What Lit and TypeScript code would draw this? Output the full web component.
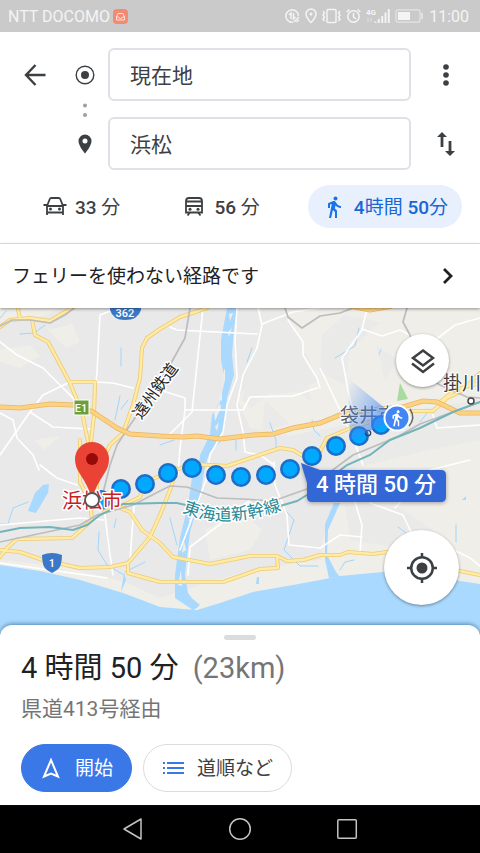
import { LitElement, html, css, svg } from "lit";
import { customElement, state } from "lit/decorators.js";

const OUTLINE_ROADS = [
  "M0 327L10 320L30 318L50 321L63 313L73 308",
  "M17 305L20 318",
  "M32 320L35 335L48 342L70 383L82 412L88 442L90 470",
  "M70 382L95 382L94 415L91 442",
  "M207 308L180 317L160 329L147 338L142 348L140 378L133 405L123 433L110 445L106 453L98 470L96 500",
  "M80 440L80 482L90 502L92 520L72 538L17 539L7 548L0 557",
  "M0 550L20 552L43 560L80 568L110 567L128 563L150 537L160 515L172 485L176 468",
  "M128 563L128 573L160 582L223 582L260 569L278 568L277 557",
  "M120 508L130 512L142 530L160 543L173 557L210 564L250 556L277 556L287 561L303 560L320 555L340 555L348 552L373 554L387 552L420 556L460 571L480 575",
  "M104 512L123 505L140 497L145 482L160 476L192 464L227 466L280 448L293 450L303 456L318 455L327 438L353 427L390 416L413 411L433 411L447 398L460 392L480 373",
  "M440 402L455 390L480 383",
];

const HIGHWAYS = [
  "M0 407L20 408L50 404L73 405L93 412L117 428L130 434L160 436L183 437L197 436L220 439L253 435L273 434L293 428L320 423L340 415L370 410L403 407L423 401L437 402L460 413L480 413",
  "M350 306L370 310L392 306",
];

const LOCAL_ROADS = [
  "M0 342L17 355L43 368L67 392L77 402",
  "M118 308L100 315L97 372L96 382",
  "M0 413L13 420L17 438L33 455L39 470",
  "M70 382L43 395L30 412L0 455",
  "M96 382L113 383L133 388",
  "M30 412L53 427L90 429",
  "M170 327L177 330L257 334",
  "M203 308L198 355L192 412L170 434",
  "M258 308L262 325L257 348L243 375L237 405L243 432L245 452L260 455L274 465",
  "M160 390L185 398L185 410L180 448L178 475",
  "M185 410L243 410L250 397L293 396L317 388",
  "M262 324L293 312L320 308",
  "M288 320L303 342L303 355L317 378L320 388",
  "M237 308L235 340L237 378L227 405L223 432L210 455L206 480",
  "M367 308L362 330L342 358L347 385L352 408L358 430",
  "M362 329L382 336L400 330L410 335",
  "M438 338L455 325L480 318",
  "M320 368L333 395L353 438L363 465",
  "M433 415L437 428L480 425",
  "M0 525L80 518L104 520",
  "M104 508L110 555L113 575",
  "M134 505L130 560",
  "M0 563L107 578",
  "M40 465L57 478L77 485",
  "M206 480L195 510L180 550",
  "M250 500L223 522L190 547L188 575",
  "M274 462L275 485L287 515L289 545L320 548",
  "M355 502L362 525L360 552",
  "M370 503L403 515L411 532",
  "M320 548L340 535L362 537",
  "M456 551L470 558L480 566",
  "M395 508L430 470L470 460",
];

const RAILWAYS = [
  "M0 326L12 320L30 320L50 323L65 315L74 308",
  "M0 542L33 535L80 525L97 515L133 505L160 491L170 486L187 487L217 498L243 499L273 501L307 489L353 455L397 437L420 424L480 402",
  "M190 308L185 338L170 365L137 415L130 425L117 445L110 465L100 505",
  "M285 308L288 317L302 328L320 316L340 313L353 308",
  "M407 308L403 322L410 335L418 370L440 385L467 397L480 398",
];

const SHINKANSEN =
  "M0 532L20 528L50 527L73 530L87 525L100 515L123 504L160 503L177 503L225 514L280 506L297 501L307 495L347 465L370 455L390 440L420 428L453 412L480 402";

const STREAMS = [
  "M0 318L6 311",
  "M20 334L34 333L45 325",
  "M121 348V366",
  "M120 396L115 420",
  "M128 400L121 409",
  "M0 524L8 524L13 508L28 502",
  "M99 532L98 550L107 565L124 575",
  "M125 572L145 562",
  "M116 519L114 528",
  "M170 518L177 545",
  "M252 348L247 362",
  "M270 423L276 440V450",
  "M236 440V450",
  "M312 420L314 430L320 436",
  "M359 328L355 346L335 358",
  "M381 350L379 354",
  "M285 510L294 520L284 550L300 566L318 566",
  "M428 412L420 422",
  "M398 527L406 533",
  "M456 525V542",
  "M340 570L345 562L354 560",
  "M174 440L160 445",
];

const TERRAIN = [
  "M0 350L30 345L40 356L20 368L0 362Z",
  "M48 330L72 324L80 342L66 348Z",
  "M0 308H60L45 316L0 322Z",
  "M34 440L60 436L44 450Z",
  "M258 308H480V590L320 585L322 540L350 470L318 430L290 436L250 428L238 400L262 360Z",
  "M0 560L60 566L125 582L160 598L200 585L250 570L320 560L480 560V590L320 585L250 600L200 615L160 612L80 585L0 570Z",
  "M205 530L240 510L262 530L250 550L210 560Z",
];

const URBAN = [
  "M262 308L285 308L300 340L318 380L300 392L268 394L252 408L242 400Z",
  "M322 335L345 315L380 322L350 350L345 385L320 372Z",
  "M300 345L312 402L298 392Z",
  "M265 400L290 424L262 432Z",
  "M320 430L400 412L480 400V440L430 450L380 462L330 475Z",
  "M345 505L400 508L440 535L400 548L350 540Z",
  "M376 345L398 360L385 380Z",
  "M440 345L452 350L440 365Z",
];

const ROUTE_DOTS: [number, number][] = [
  [101, 500], [121, 489], [145, 484], [168, 473], [192, 468], [216, 475], [241, 477],
  [266, 475], [290, 469], [312, 456], [336, 446], [359, 436], [381, 425],
];

const WALKER =
  "M13.5 5.5c1.1 0 2-.9 2-2s-.9-2-2-2-2 .9-2 2 .9 2 2 2zM9.8 8.9L7 23h2.1l1.8-8 2.1 2v6h2v-7.500l-2.100-2 .6-3C14.800 12 16.800 13 19 13v-2c-1.900 0-3.500-1-4.300-2.400l-1-1.600c-.4-.6-1-1-1.700-1-.3 0-.5.1-.8.1L6 8.300V13h2V9.600l1.800-.7";

const lines = (paths: string[], cls: string) =>
  svg`<g class=${cls}>${paths.map((d) => svg`<path d=${d} />`)}</g>`;

@customElement("route-map")
class RouteMap extends LitElement {
  static styles = css`
    :host { display: block; position: relative; overflow: hidden; }
    .map { position: absolute; inset: 0; width: 100%; height: 100%; display: block; }
    .case, .fill, .local, .rail, .stream { fill: none; stroke-linejoin: round; stroke-linecap: round; }
    .terrain { fill: #efeee9; }
    .urban { fill: #eaeae8; }
    .water { fill: #a9d9fe; }
    .stream { stroke: #a3d5fb; stroke-width: 1; }
    .local { stroke: #fff; stroke-width: 1.6; }
    .rail { stroke: #bdbdc0; stroke-width: 1.700; }
    .case { stroke: #eecb70; stroke-width: 4; }
    .fill { stroke: #ffeba6; stroke-width: 2.400; }
    .hcase { fill: none; stroke: #e9b565; stroke-width: 5; }
    .hfill { fill: none; stroke: #fcd280; stroke-width: 3.400; }
    .bullet { fill: none; stroke: #74b3b9; stroke-width: 2; }
    .dot { fill: #00a9ff; stroke: #1d6dc9; stroke-width: 2.600; }
    text { font-family: Roboto, "Noto Sans CJK JP", sans-serif; paint-order: stroke; stroke-linejoin: round; }
    .city { font-size: 19px; fill: #5b5f66; stroke: #fff; stroke-width: 2; }
    .dark { fill: #3c4043; }
    .target { font-size: 20px; fill: #c5221f; stroke: #fff; stroke-width: 3; }
    .railname { font-size: 16px; fill: #222; stroke: #fff; stroke-width: 3; }
    .bulletname { font-size: 17px; fill: #288a96; stroke: #fff; stroke-width: 3; }
    .badge { font-size: 11px; font-weight: 500; fill: #fff; text-anchor: middle; }
    .callout { fill: #3367d6; filter: drop-shadow(0 1px 2px #0005); }
    .time { font-size: 22px; font-weight: 500; fill: #fff; text-anchor: middle; }
    button {
      position: absolute; border: 0; padding: 0; border-radius: 50%; background: #fff; color: #3c4043;
      display: grid; place-items: center; box-shadow: 0 1px 3px #0006;
    }
    .layers { top: 26px; right: 31px; width: 53px; height: 53px; }
    .locate { bottom: 30px; right: 21px; width: 75px; height: 75px; }
  `;

  render() {
    return html`
      <svg class="map" viewBox="0 308 480 327" preserveAspectRatio="xMidYMid slice" role="img" aria-label="地図">
        <defs>
          <linearGradient id="beam" x1="397" y1="418" x2="345" y2="390" gradientUnits="userSpaceOnUse">
            <stop offset="0" stop-color="#4285f4" stop-opacity=".8" />
            <stop offset="1" stop-color="#4285f4" stop-opacity=".02" />
          </linearGradient>
          <path id="arc" d="M182 512C212 525 246 523 290 507" />
        </defs>
        <rect y="308" width="480" height="327" fill="#e9e9e9" />
        ${lines(TERRAIN, "terrain")} ${lines(URBAN, "urban")}
        <path class="water" d="M0 565L40 571L80 580L123 593L147 602L160 607L183 609L197 610L220 603L253 592L293 585L320 580L340 576L383 572L440 576L460 581L480 584V635H0Z" />
        <path class="water" d="M227 308H237L234 328L232 355L234 375L227 398L225 422L220 442L210 452L205 465L203 478L200 498L190 532L185 575L188 593L198 607L193 610L175 598V575L180 538L188 505L192 478L199 465L200 455L210 435L212 415L220 402L225 380L221 360L221 340Z" />
        <path class="water" d="M43 485L49 484L48 493L36 513L28 511L35 493ZM334 503L340 503L328 530L327 555L336 572L340 577L329 578L325 560L325 524ZM188 595L200 605L193 610ZM257 577H259V584H256ZM462 500L466 496V500ZM124 573L126 580L121 592Z" />
        <path class="terrain" d="M229 314L233 313L230 321ZM228 332L232 328L229 337ZM224 370L225 369V380L223 379ZM219 399L222 392V401ZM214 412L220 403L221 408L215 421ZM215 427L219 422L217 431ZM189 520L193 514L190 526ZM182 553L184 541L186 550ZM178 585L181 570L182 586Z" />
        ${lines(STREAMS, "stream")} ${lines(LOCAL_ROADS, "local")}
        ${lines(OUTLINE_ROADS, "case")} ${lines(OUTLINE_ROADS, "fill")}
        ${lines(RAILWAYS, "rail")}
        ${lines(HIGHWAYS, "hcase")} ${lines(HIGHWAYS, "hfill")}
        <path class="bullet" d=${SHINKANSEN} />
        <path d="M400 383L408 399L397 401Z" fill="#a8dba0" />

        <path d="M110 308H141V310Q138 320 125 320Q113 320 110 310Z" fill="#3b78c8" />
        <text class="badge" x="125" y="317">362</text>
        <rect x="74" y="400" width="15" height="15" fill="#6a9f3c" stroke="#fff" stroke-width="1" />
        <text class="badge" x="81" y="412">E1</text>
        <path d="M42 555Q47 553 52 553Q57 553 62 555Q62 567 57 570L52 573L47 570Q42 567 42 555Z" fill="#3b78c8" />
        <text class="badge" x="52" y="567">1</text>

        <text class="railname" transform="translate(141 420) rotate(-54)">遠州鉄道</text>
        <text class="bulletname"><textPath href="#arc">東海道新幹線</textPath></text>
        <text class="city" x="340" y="422">袋井市</text>
        <text class="city dark" x="443" y="390">掛川</text>
        <circle cx="471" cy="401" r="3" fill="#fff" stroke="#444" stroke-width="1.500" />

        ${ROUTE_DOTS.map(([x, y]) => svg`<circle class="dot" cx=${x} cy=${y} r="8.700" />`)}
        <circle cx="368" cy="433" r="2.700" fill="none" stroke="#345" stroke-width="1.300" />
        <path d="M397 418L348 378L350 440Z" fill="url(#beam)" />
        <path d="M410 409Q416 418 409 426" fill="none" stroke="#666" stroke-width="1.500" />
        <circle cx="397" cy="418" r="12.500" fill="#4285f4" stroke="#fff" stroke-width="2" />
        <path d=${WALKER} fill="#fff" transform="translate(388 409) scale(.75)" />

        <text class="target" x="62" y="508">浜松市</text>
        <path d="M92 498Q88 486 80 474Q75 467 75 459A17 17 0 0 1 109 459Q109 467 104 474Q96 486 92 498Z" fill="#ea4335" />
        <circle cx="92" cy="459" r="6" fill="#960a0a" />
        <circle cx="92" cy="500" r="7" fill="#fff" stroke="#555" stroke-width="1.800" />

        <path class="callout" d="M301 463L320 470H441Q446 470 446 475V497Q446 502 441 502H312Q307 502 307 497V483Z" />
        <text class="time" x="376" y="492">4 時間 50 分</text>
      </svg>
      <button class="layers" aria-label="レイヤ">
        <svg width="26" height="28" viewBox="0 0 26 28" fill="none" stroke="currentColor" stroke-width="2.500">
          <path d="M13 3.500L23 11L13 18.500L3 11Z" /><path d="M2 16.500L13 25L24 16.500" />
        </svg>
      </button>
      <button class="locate" aria-label="現在地を表示">
        <svg width="30" height="30" viewBox="0 0 30 30" fill="none" stroke="currentColor" stroke-width="2.500">
          <circle cx="15" cy="15" r="10.800" /><circle cx="15" cy="15" r="5.500" fill="currentColor" stroke="none" />
          <path d="M15 0V5M15 25V30M0 15H5M25 15H30" />
        </svg>
      </button>
    `;
  }
}

const carIcon = svg`
  <path d="M4 10L6.800 3Q7.200 2 8.300 2H15.700Q16.800 2 17.200 3L20 10V19M4 10V19M4 10H20M4 16.500H20M.5 9H4M20 9H23.500" fill="none" stroke="currentColor" stroke-width="1.800" />
  <circle cx="7.500" cy="13" r="1.500" /><circle cx="16.500" cy="13" r="1.500" />`;
const trainIcon = svg`
  <path d="M4 5Q4 2 7 2H17Q20 2 20 5V16.500H4ZM4 10H20M4 5.500H20M8 16.500L5.500 19.500M16 16.500L18.500 19.500" fill="none" stroke="currentColor" stroke-width="1.800" />
  <circle cx="8" cy="13.200" r="1.500" /><circle cx="16" cy="13.200" r="1.500" />`;
const walkIcon = svg`<path d=${WALKER} transform="translate(0 -1)" />`;

const MODES = [
  { id: "car", label: html`<b>33</b> 分`, icon: carIcon },
  { id: "transit", label: html`<b>56</b> 分`, icon: trainIcon },
  { id: "walk", label: html`<b>4</b>時間 <b>50</b>分`, icon: walkIcon },
];

@customElement("app-root")
class AppRoot extends LitElement {
  @state() private mode = "walk";

  static styles = css`
    :host {
      display: flex; flex-direction: column; min-height: 100vh; background: #fff; color: #202124;
      font-family: Roboto, "Noto Sans CJK JP", sans-serif;
    }
    * { box-sizing: border-box; }
    svg { display: block; flex: none; }
    button { font: inherit; color: inherit; border: 0; padding: 0; background: none; cursor: pointer; }
    .status {
      display: flex; align-items: center; justify-content: space-between; height: 32px; padding: 0 11px 0 8px;
      background: #cacaca; color: #f4f4f4; font-size: 16px;
    }
    .status div { display: flex; align-items: center; gap: 3px; }
    .status .right { gap: 5px; }
    .status .clock { margin-left: 1px; }
    .search { display: grid; grid-template-columns: 70px 30px 1fr 69px; padding-top: 16px; color: #3c4043; }
    .side { display: flex; flex-direction: column; gap: 16px; }
    .side button { height: 53px; display: grid; place-items: center; }
    .stops { display: flex; flex-direction: column; align-items: center; justify-content: space-between; padding: 15px 0 14px; }
    .fields { display: flex; flex-direction: column; gap: 16px; padding-left: 8px; }
    .fields input {
      width: 100%; height: 53px; border: 2px solid #e0e1e7; border-radius: 6px; padding: 0 20px 2px; background: #fff;
      font: inherit; font-size: 21px; color: #3c4043; outline: none;
    }
    .modes { display: flex; justify-content: space-between; padding: 15px 18px 15px 29px; border-bottom: 1px solid #e4e5ed; color: #3c4043; }
    .modes button {
      display: flex; align-items: center; gap: 8px; height: 43px; padding: 0 14px; border-radius: 22px; font-size: 19px;
    }
    .modes .label { padding-bottom: 3px; white-space: pre; }
    .modes b { font-weight: 500; }
    .modes .on { background: #e8f0fe; color: #1967d2; }
    .modes .on svg { color: #1a73e8; }
    .notice {
      position: relative; z-index: 1; display: flex; align-items: center; justify-content: space-between; height: 64px; padding: 0 26px 0 12px;
      background: #fff; font-size: 19px; text-align: left; box-shadow: 0 1px 3px #0006;
    }
    .notice span { padding-bottom: 3px; }
    route-map { flex: 1 0 327px; }
    .sheet {
      position: relative; margin-top: -10px; padding: 10px 21px 13px; background: #fff; border-radius: 12px 12px 0 0;
      box-shadow: 0 -1px 4px #0a3a6a88;
    }
    .handle { width: 32px; height: 5px; margin: 0 auto 8px; border-radius: 3px; background: #dadce0; }
    h1 { margin: 0; font-size: 29px; line-height: 40px; font-weight: 400; }
    h1 span { margin-left: 7px; color: #757575; }
    .via { margin: 7px 0 21px; font-size: 21px; line-height: 28px; color: #757575; }
    .actions { display: flex; gap: 11px; }
    .actions button {
      display: flex; align-items: center; height: 48px; border-radius: 24px; padding: 0 18px; gap: 13px;
      font-size: 19px; border: 1px solid #dadce0; color: #3c4043;
    }
    .actions span { padding-bottom: 3px; }
    .actions .start { background: #3b78e7; border-color: #3b78e7; color: #fff; }
    .nav { display: flex; justify-content: center; gap: 83px; height: 48px; background: #000; color: #c4c4c4; }
    .nav button { display: grid; place-items: center; }
  `;

  private statusBar() {
    return html`
      <div class="status">
        <div>
          <span>NTT DOCOMO</span>
          <svg width="15" height="15" viewBox="0 0 15 15" fill="none" stroke="#ffe4dc">
            <rect width="15" height="15" rx="4" fill="#f58a73" stroke="none" />
            <path d="M3.500 8L5 4.500H10L11.500 8V11H3.500ZM3.500 8H5.500Q6 9.500 7.500 9.500T9.500 8H11.500" />
          </svg>
        </div>
        <div class="right">
          <svg width="15" height="16" viewBox="0 0 15 16" fill="none" stroke="currentColor" stroke-width="1.500">
            <path d="M13.500 8A6.300 6.300 0 1 0 8 14.300M4 7L6 5V11M8.500 5V11L10.500 9M9 14L14 9M11.500 14L14 12" />
          </svg>
          <svg width="12" height="16" viewBox="0 0 12 16" fill="none" stroke="currentColor" stroke-width="1.500">
            <path d="M6 14.500Q1 9.500 1 6A5 5 0 0 1 11 6Q11 9.500 6 14.500Z" /><circle cx="6" cy="6" r="1.500" fill="currentColor" stroke="none" />
          </svg>
          <svg width="19" height="16" viewBox="0 0 19 16" fill="none" stroke="currentColor" stroke-width="1.500">
            <rect x="5" y="1.500" width="9" height="13" rx="1" /><path d="M1 3L2.500 5L1 7L2.500 9L1 11L2.500 13M18 3L16.500 5L18 7L16.500 9L18 11L16.500 13" />
          </svg>
          <svg width="15" height="16" viewBox="0 0 15 16" fill="none" stroke="currentColor" stroke-width="1.500">
            <circle cx="7.500" cy="8.500" r="5.700" /><path d="M7.500 5V9L10 11M.7 4L3.500 1.500M14.300 4L11.500 1.500" />
          </svg>
          <svg width="24" height="16" viewBox="0 0 24 16">
            <text x="0" y="7" font-size="8" font-weight="700" fill="currentColor" font-family="Roboto, sans-serif">4G</text>
            <path d="M9.500 15V13.500M12.800 15V11M16.200 15V8M19.500 15V4.500M22.800 15V1" fill="none" stroke="currentColor" stroke-width="1.900" />
            <path d="M2 10V14M5 10V14" stroke="#dadada" stroke-width="1.300" />
          </svg>
          <svg width="28" height="14" viewBox="0 0 28 14" fill="none" stroke="#e4e4e4">
            <rect x="1" y=".8" width="24" height="12.400" rx="2" stroke-width="1.200" />
            <rect x="3" y="3" width="12" height="8" fill="#f4f4f4" stroke="none" /><path d="M27 4V10" stroke-width="1.800" />
          </svg>
          <span class="clock">11:00</span>
        </div>
      </div>
    `;
  }

  render() {
    return html`
      ${this.statusBar()}
      <div class="search">
        <div class="side">
          <button aria-label="戻る">
            <svg width="22" height="22" viewBox="0 0 22 22" fill="none" stroke="currentColor" stroke-width="2.400">
              <path d="M21.500 11H2.500M11.500 1L2 11L11.500 21" />
            </svg>
          </button>
        </div>
        <div class="stops">
          <svg width="24" height="24" viewBox="0 0 24 24">
            <circle cx="12" cy="12" r="8.800" fill="none" stroke="currentColor" stroke-width="1.400" /><circle cx="12" cy="12" r="4" fill="currentColor" />
          </svg>
          <svg width="6" height="16" viewBox="0 0 6 16" fill="#9aa0a6"><circle cx="3" cy="3.500" r="2" /><circle cx="3" cy="13" r="2" /></svg>
          <svg width="24" height="24" viewBox="0 0 24 24" fill="currentColor">
            <path fill-rule="evenodd" d="M12 2.500A6.500 6.500 0 0 0 5.500 9C5.500 14 12 21.500 12 21.500S18.500 14 18.500 9A6.500 6.500 0 0 0 12 2.500ZM12 6.500A2.500 2.500 0 1 1 12 11.500A2.500 2.500 0 1 1 12 6.500Z" />
          </svg>
        </div>
        <div class="fields">
          <input aria-label="出発地" .value=${"現在地"} />
          <input aria-label="目的地" .value=${"浜松"} />
        </div>
        <div class="side">
          <button aria-label="その他のオプション">
            <svg width="6" height="22" viewBox="0 0 6 22" fill="currentColor"><circle cx="3" cy="3" r="2.800" /><circle cx="3" cy="11" r="2.800" /><circle cx="3" cy="19" r="2.800" /></svg>
          </button>
          <button aria-label="出発地と目的地を入れ替える">
            <svg width="20" height="28" viewBox="0 0 20 28" fill="currentColor">
              <path d="M6 2L11 7H7.400V17H4.600V7H1ZM14 26L9 21H12.600V11H15.400V21H19Z" />
            </svg>
          </button>
        </div>
      </div>
      <div class="modes">
        ${MODES.map(
          (m) => html`<button class=${m.id === this.mode ? "on" : ""} aria-pressed=${m.id === this.mode} @click=${() => (this.mode = m.id)}>
            <svg width="24" height="22" viewBox="0 0 24 22" fill="currentColor">${m.icon}</svg><span class="label">${m.label}</span>
          </button>`
        )}
      </div>
      <button class="notice">
        <span>フェリーを使わない経路です</span>
        <svg width="12" height="18" viewBox="0 0 12 18" fill="none" stroke="currentColor" stroke-width="2.800"><path d="M2 2L9 9L2 16" /></svg>
      </button>
      <route-map></route-map>
      <section class="sheet">
        <div class="handle"></div>
        <h1>4 時間 50 分 <span>(23km)</span></h1>
        <p class="via">県道413号経由</p>
        <div class="actions">
          <button class="start">
            <svg width="22" height="24" viewBox="0 0 22 24" fill="none" stroke="currentColor" stroke-width="2"><path d="M11 4L18 20.500L11 17.500L4 20.500Z" /></svg>
            <span>開始</span>
          </button>
          <button>
            <svg width="22" height="16" viewBox="0 0 22 16" fill="none" stroke="#3b78e7" stroke-width="2">
              <path d="M5 3H22M5 8H22M5 13H22M1 3H3M1 8H3M1 13H3" />
            </svg>
            <span>道順など</span>
          </button>
        </div>
      </section>
      <nav class="nav" aria-label="システム">
        <button aria-label="戻る"><svg width="24" height="24" viewBox="0 0 24 24" fill="none" stroke="currentColor" stroke-width="1.500"><path d="M20 2V22L3 12Z" stroke-linejoin="round" /></svg></button>
        <button aria-label="ホーム"><svg width="24" height="24" viewBox="0 0 24 24" fill="none" stroke="currentColor" stroke-width="1.500"><circle cx="12" cy="12" r="10.300" /></svg></button>
        <button aria-label="アプリ履歴"><svg width="24" height="24" viewBox="0 0 24 24" fill="none" stroke="currentColor" stroke-width="1.500"><rect x="2.800" y="2.800" width="18.500" height="18.500" rx="1" /></svg></button>
      </nav>
    `;
  }
}
